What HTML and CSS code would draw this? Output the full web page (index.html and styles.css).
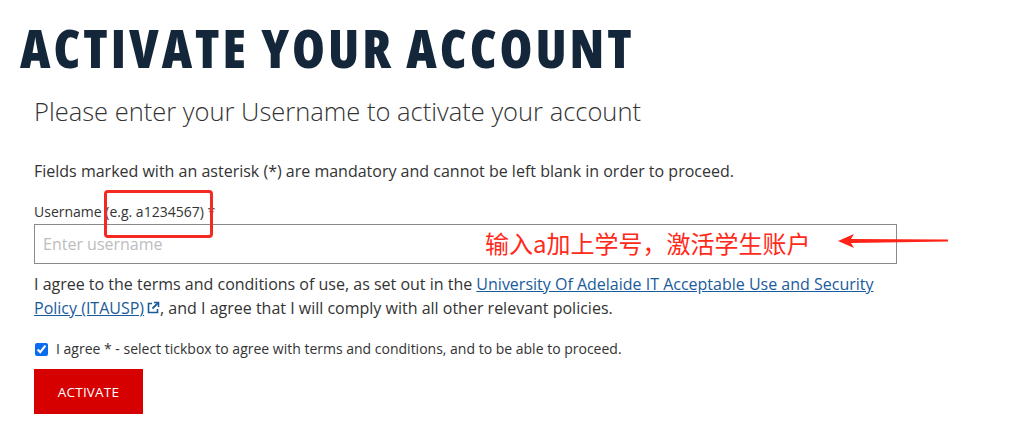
FILE: index.html
```html
<!DOCTYPE html>
<html>
<head>
<meta charset="utf-8">
<link rel="stylesheet" href="styles.css">
</head>
<body>
<div class="page">
  <h1 class="title">ACTIVATE YOUR ACCOUNT</h1>
  <div class="content">
    <h2 class="subtitle">Please enter your Username to activate your account</h2>
    <p class="note">Fields marked with an asterisk (*) are mandatory and cannot be left blank in order to proceed.</p>
    <div class="field">
      <label class="label">Username (e.g. a1234567) *</label>
      <span class="mark"></span>
      <div class="input-wrap">
        <input class="input" type="text" placeholder="Enter username">
        <span class="annot">输入a加上学号，激活学生账户</span>
        <svg class="arrow" width="112" height="14" viewBox="0 0 112 14"><polygon points="0,7 16,0 13,5 110,5.5 110,7.5 13,9 16,14" fill="#ff2417"/></svg>
      </div>
    </div>
    <p class="terms">I agree to the terms and conditions of use, as set out in the <a class="link" href="#">University Of Adelaide IT Acceptable Use and Security Policy (ITAUSP)<svg class="ext" width="14" height="14" viewBox="0 0 14 14"><path d="M6 2.5H2.5v9h9V8" fill="none" stroke="#1a5b9c" stroke-width="1.6"/><path d="M8 1.5h4.5V6" fill="none" stroke="#1a5b9c" stroke-width="1.6"/><path d="M12.3 1.7L6.5 7.5" stroke="#1a5b9c" stroke-width="1.8"/></svg></a>, and I agree that I will comply with all other relevant policies.</p>
    <label class="agree"><input class="check" type="checkbox" checked> I agree * - select tickbox to agree with terms and conditions, and to be able to proceed.</label>
    <button class="btn">ACTIVATE</button>
  </div>
</div>
</body>
</html>
```
FILE: styles.css
```css
html, body { margin: 0; padding: 0; background: #fff; }
body { font-family: "Open Sans", "Noto Sans", sans-serif; color: #333; }
.page { padding: 20px 0 0 20px; }
.title {
  margin: 0;
  font-family: "Open Sans", sans-serif;
  font-weight: 800;
  font-size: 53px;
  line-height: 56px;
  font-stretch: 75%;
  color: #14263a;
  letter-spacing: 3px;
}
.content { padding-left: 14px; }
.subtitle {
  margin: 18px 0 0;
  font-weight: 300;
  font-size: 25.5px;
  line-height: 34px;
  color: #333;
}
.note { margin: 32px 0 0; font-size: 16px; line-height: 22px; }
.field { position: relative; margin-top: 20px; }
.label { display: block; font-size: 14px; line-height: 20px; color: #333; }
.mark {
  position: absolute;
  z-index: 2;
  left: 70px; top: -12px;
  box-sizing: border-box;
  width: 109px; height: 48px;
  border: 3px solid #f22a22;
  border-radius: 4px;
}
.input-wrap { position: relative; margin-top: 2px; }
.input {
  box-sizing: border-box;
  width: 863px; height: 40px;
  border: 1px solid #8a8a8a;
  padding: 0 8px;
  font-family: "Open Sans", sans-serif;
  font-size: 16px;
  color: #333;
  display: block;
}
.input::placeholder { color: #bdbdbd; }
.annot {
  position: absolute;
  left: 451px; top: 3px;
  font-family: "Noto Sans CJK SC", sans-serif;
  font-size: 24px;
  line-height: 32px;
  color: #ff2a1a;
}
.arrow { position: absolute; left: 804px; top: 10px; }
.terms { margin: 8px 0 0; font-size: 16px; line-height: 24px; max-width: 860px; }
.link { color: #1a5b9c; text-decoration: underline; }
.ext { vertical-align: -1px; margin-left: 2px; }
.agree { display: flex; align-items: center; margin-top: 19px; font-size: 14px; line-height: 20px; gap: 6px; }
.check { margin: 0 2px 0 1px; width: 13px; height: 13px; accent-color: #0b6cf0; }
.btn {
  display: block;
  margin-top: 10px;
  width: 109px; height: 45px;
  background: #d70000;
  color: #fff;
  border: 0;
  font-family: "Open Sans", sans-serif;
  font-size: 13.5px;
  letter-spacing: 0.2px;
}
```
